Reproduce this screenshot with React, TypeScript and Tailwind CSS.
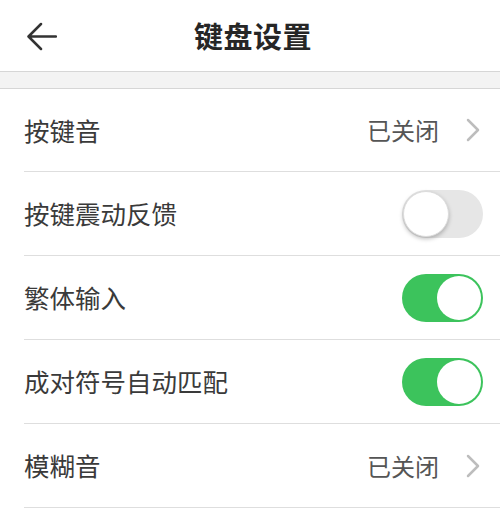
import { useState } from "react"

type Row =
  | { label: string; kind: "link"; value: string }
  | { label: string; kind: "toggle"; on: boolean }

const rows: Row[] = [
  { label: "按键音", kind: "link", value: "已关闭" },
  { label: "按键震动反馈", kind: "toggle", on: false },
  { label: "繁体输入", kind: "toggle", on: true },
  { label: "成对符号自动匹配", kind: "toggle", on: true },
  { label: "模糊音", kind: "link", value: "已关闭" },
]

function Toggle({ initial }: { initial: boolean }) {
  const [on, setOn] = useState(initial)
  return (
    <button
      onClick={() => setOn(!on)}
      className={
        on
          ? "flex h-[48px] w-[81px] items-center justify-end rounded-full bg-[#3cc35c] p-[2px]"
          : "flex h-[48px] w-[81px] items-center justify-start rounded-full bg-[#e6e6e6] p-[1px]"
      }
    >
      <span
        className={
          on
            ? "h-[44px] w-[44px] rounded-full bg-white"
            : "h-[46px] w-[46px] rounded-full bg-white shadow-[0_2px_4px_rgba(0,0,0,0.25)] border border-[#dcdcdc]"
        }
      />
    </button>
  )
}

export default function App() {
  return (
    <div
      className="h-[516px] w-[500px] overflow-hidden bg-white text-[#333]"
      style={{ fontFamily: '"Noto Sans CJK SC", "Noto Sans", sans-serif' }}
    >
      <header className="relative flex h-[72px] items-center justify-center border-b border-[#d6d6d6] pl-[6px]">
        <button className="absolute left-[26px] top-[21px] text-[#333]">
          <svg width="31" height="31" viewBox="0 0 31 31" fill="none">
            <path
              d="M30 15.5H3M15 3L2.5 15.5L15 28"
              stroke="currentColor"
              strokeWidth="2.5"
              strokeLinecap="round"
              strokeLinejoin="round"
            />
          </svg>
        </button>
        <h1 className="text-[29px] font-bold tracking-[0.5px] text-[#262626]">键盘设置</h1>
      </header>

      <div className="h-[17px] border-b border-[#d6d6d6] bg-[#f3f3f3]" />

      <main>
        {rows.map((row, i) => (
          <div key={row.label} className={i === 0 ? "h-[83px] pl-[24px]" : "h-[84px] pl-[24px]"}>
            <div className="flex h-full items-center justify-between border-b border-[#dedede] pr-[17px]">
              <span className="text-[25.5px] text-[#3a3a3a]">{row.label}</span>
              {row.kind === "link" ? (
                <div className="flex items-center">
                  <span className="text-[24px] text-[#555]">{row.value}</span>
                  <svg width="16" height="24" viewBox="0 0 16 24" fill="none" className="ml-[26px] mr-[2px]">
                    <path
                      d="M3 2L13 12L3 22"
                      stroke="#bdbdbd"
                      strokeWidth="2.5"
                      strokeLinecap="round"
                      strokeLinejoin="round"
                    />
                  </svg>
                </div>
              ) : (
                <Toggle initial={row.on} />
              )}
            </div>
          </div>
        ))}
      </main>
    </div>
  )
}
